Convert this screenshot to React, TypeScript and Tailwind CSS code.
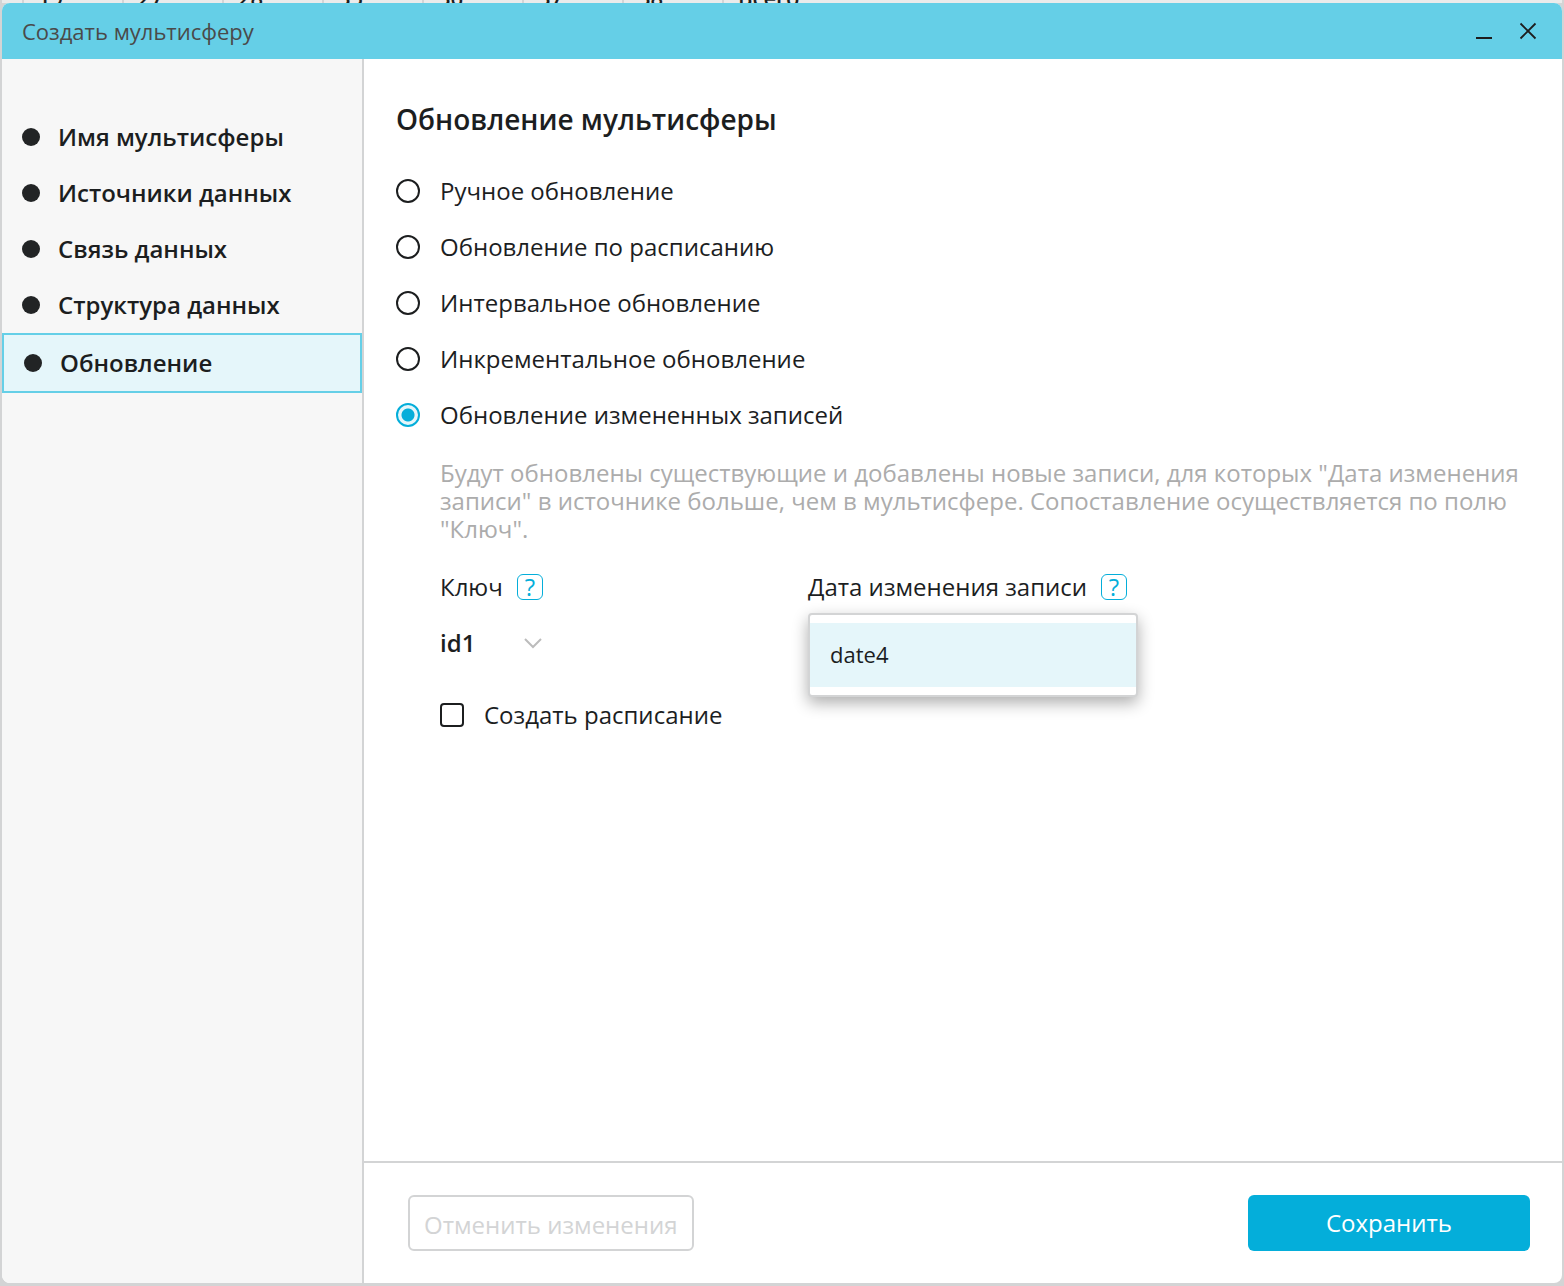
import { useState } from "react";

const columns = ["19", "27", "28", "35", "36", "37", "38", "Всего"];

const steps = [
  "Имя мультисферы",
  "Источники данных",
  "Связь данных",
  "Структура данных",
  "Обновление",
];

const modes = [
  "Ручное обновление",
  "Обновление по расписанию",
  "Интервальное обновление",
  "Инкрементальное обновление",
  "Обновление измененных записей",
];

function HelpButton({ label }: { label: string }) {
  return (
    <button
      type="button"
      aria-label={label}
      className="flex size-[26px] items-center justify-center rounded-md border border-[#04aeda] text-2xl leading-6 text-[#04aeda]"
    >
      ?
    </button>
  );
}

function TitleBar() {
  return (
    <header className="flex h-14 shrink-0 items-center justify-between bg-[#65cfe7] pr-6 pl-5">
      <h1 className="text-[22px] leading-7 text-[#4a4a4a]">Создать мультисферу</h1>
      <div className="flex items-center gap-5 text-[#1d1d1d]">
        <button type="button" aria-label="Свернуть" className="size-6">
          <svg viewBox="0 0 24 24" className="size-6" stroke="currentColor" strokeWidth="2">
            <path d="M4 19h16" />
          </svg>
        </button>
        <button type="button" aria-label="Закрыть" className="-mr-0.5 size-6">
          <svg viewBox="0 0 24 24" className="size-6" stroke="currentColor" strokeWidth="1.8">
            <path d="M4.500 4.500l15 15M19.500 4.500l-15 15" />
          </svg>
        </button>
      </div>
    </header>
  );
}

function Sidebar() {
  return (
    <nav className="w-[362px] shrink-0 border-r-2 border-[#d3d4d5] bg-[#f7f7f7] pt-[50px]">
      {steps.map((step, i) => (
        <button
          key={step}
          type="button"
          className={
            i === steps.length - 1
              ? "flex h-[60px] w-full items-center gap-[18px] border-2 border-[#65cfe7] bg-[#e5f6fa] px-5 text-left"
              : "flex h-14 w-full items-center gap-[18px] px-5 text-left"
          }
        >
          <span className="size-[18px] rounded-full bg-[#222425]" />
          <span className="text-2xl font-semibold">{step}</span>
        </button>
      ))}
    </nav>
  );
}

export default function App() {
  const [mode, setMode] = useState(4);
  return (
    <div className="flex min-h-screen flex-col bg-[#d3d4d5] px-0.5 pb-[3px] font-['Open_Sans','Noto_Sans',sans-serif] text-[#1c1e1f]">
      <div className="flex h-[3px] items-end overflow-hidden bg-[#ebebeb] pl-5" aria-hidden="true">
        {columns.map((c) => (
          <span key={c} className="w-[100px] border-l-2 border-[#d3d4d5] pl-[14px] text-[22px] leading-3 font-semibold">
            {c}
          </span>
        ))}
      </div>
      <div role="dialog" aria-label="Создать мультисферу" className="flex grow flex-col overflow-hidden rounded-lg bg-white">
        <TitleBar />
        <div className="flex grow">
          <Sidebar />
          <div className="flex min-w-0 grow flex-col">
            <main className="grow px-8 pt-10">
              <h2 className="text-[28px] leading-10 font-semibold">Обновление мультисферы</h2>
              <fieldset className="mt-6">
                {modes.map((label, i) => (
                  <label key={label} className="flex h-14 items-center gap-5 text-2xl">
                    <input
                      type="radio"
                      name="mode"
                      checked={mode === i}
                      onChange={() => setMode(i)}
                      className="size-6 shrink-0 appearance-none rounded-full border-2 border-[#1c1e1f] bg-white checked:border-[#04aeda] checked:bg-[radial-gradient(circle,#04aeda_6px,#e5f6fa_7px)]"
                    />
                    {label}
                  </label>
                ))}
              </fieldset>
              <div className="mt-4 pl-11">
                <p className="text-2xl leading-7 text-[#acacac]">
                  Будут обновлены существующие и добавлены новые записи, для которых "Дата изменения
                  записи" в источнике больше, чем в мультисфере. Сопоставление осуществляется по полю
                  "Ключ".
                </p>
                <div className="mt-4 flex text-2xl">
                  <div className="w-[368px]">
                    <div className="flex h-14 items-center gap-[14px]">
                      <label htmlFor="key">Ключ</label>
                      <HelpButton label="Подсказка: ключ" />
                    </div>
                    <div className="grid h-14 w-[104px] grid-cols-1 items-center">
                      <select
                        id="key"
                        className="col-start-1 row-start-1 w-full appearance-none bg-transparent font-semibold"
                      >
                        <option>id1</option>
                      </select>
                      <svg
                        viewBox="0 0 20 12"
                        className="pointer-events-none col-start-1 row-start-1 mr-px h-3 w-5 justify-self-end"
                        fill="none"
                        stroke="#bcbcbc"
                        strokeWidth="2"
                      >
                        <path d="M2 2l8 8 8-8" />
                      </svg>
                    </div>
                  </div>
                  <div className="relative">
                    <div className="flex h-14 items-center gap-[14px]">
                      <span id="date-label">Дата изменения записи</span>
                      <HelpButton label="Подсказка: дата изменения записи" />
                    </div>
                    <ul
                      role="listbox"
                      aria-labelledby="date-label"
                      className="absolute top-[54px] left-0 w-[330px] rounded-sm border-2 border-[#d3d4d5] bg-white py-2 shadow-[0_6px_16px_rgba(0,0,0,0.32)]"
                    >
                      <li
                        role="option"
                        aria-selected="true"
                        className="flex h-16 items-center bg-[#e5f6fa] px-5 text-[22px]"
                      >
                        date4
                      </li>
                    </ul>
                  </div>
                </div>
                <label className="mt-4 flex h-14 w-fit items-center gap-5 text-2xl">
                  <input
                    type="checkbox"
                    className="size-6 appearance-none rounded-sm border-2 border-[#1c1e1f] bg-white checked:bg-[#04aeda]"
                  />
                  Создать расписание
                </label>
              </div>
            </main>
            <footer className="flex items-center justify-between border-t-2 border-[#d3d4d5] py-8 pr-8 pl-11">
              <button
                type="button"
                disabled
                className="h-14 rounded-md border-2 border-[#d3d4d5] px-[14px] pt-1 text-2xl text-[#d3d4d5]"
              >
                Отменить изменения
              </button>
              <button type="button" className="h-14 w-[282px] rounded-md bg-[#04aeda] text-2xl text-white">
                Сохранить
              </button>
            </footer>
          </div>
        </div>
      </div>
    </div>
  );
}
